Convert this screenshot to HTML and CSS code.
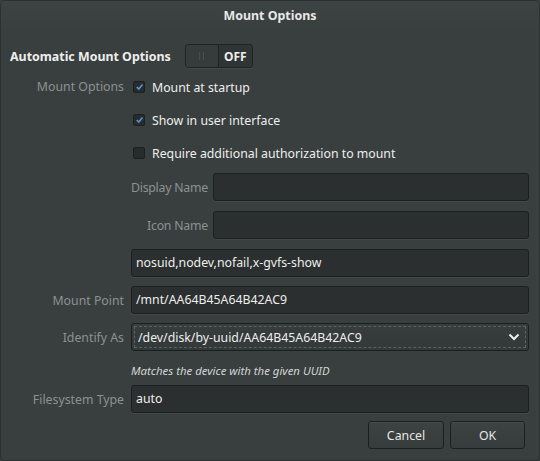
FILE: index.html
```html
<!DOCTYPE html>
<html>
<head>
<meta charset="utf-8">
<link rel="stylesheet" href="styles.css">
</head>
<body>
<div class="window">
  <div class="titlebar">Mount Options</div>
  <div class="content">
    <div class="auto-row">
      <span class="auto-label">Automatic Mount Options</span>
      <div class="switch">
        <div class="knob"><span class="grip"></span></div>
        <span class="switch-text">OFF</span>
      </div>
    </div>
    <div class="form">
      <div class="label label-top">Mount Options</div>
      <div class="opts">
        <div class="check-row"><span class="check checked"><svg viewBox="0 0 12 12" width="12" height="12"><path d="M2.3 6 L5 8.7 L10 2.6" fill="none" stroke="#5594dc" stroke-width="2.2"/></svg></span>Mount at startup</div>
        <div class="check-row"><span class="check checked"><svg viewBox="0 0 12 12" width="12" height="12"><path d="M2.3 6 L5 8.7 L10 2.6" fill="none" stroke="#5594dc" stroke-width="2.2"/></svg></span>Show in user interface</div>
        <div class="check-row"><span class="check"></span>Require additional authorization to mount</div>
        <div class="subform">
          <div class="label sublabel">Display Name</div>
          <div class="entry"></div>
          <div class="label sublabel">Icon Name</div>
          <div class="entry"></div>
        </div>
        <div class="entry">nosuid,nodev,nofail,x-gvfs-show</div>
      </div>
      <div class="label">Mount Point</div>
      <div class="entry">/mnt/AA64B45A64B42AC9</div>
      <div class="label">Identify As</div>
      <div class="combo">
        <div class="combo-inner">
          <span>/dev/disk/by-uuid/AA64B45A64B42AC9</span>
          <svg class="chev" viewBox="0 0 12 8" width="12" height="8"><path d="M1.5 1.5 L6 6 L10.5 1.5" fill="none" stroke="#eeeeec" stroke-width="2"/></svg>
        </div>
      </div>
      <div></div>
      <div class="caption">Matches the device with the given UUID</div>
      <div class="label">Filesystem Type</div>
      <div class="entry">auto</div>
    </div>
    <div class="buttons">
      <button class="btn btn-cancel">Cancel</button>
      <button class="btn btn-ok">OK</button>
    </div>
  </div>
</div>
</body>
</html>
```
FILE: styles.css
```css
* { box-sizing: border-box; }
html, body { margin: 0; padding: 0; background: #393f3f; }
body {
  font-family: "Noto Sans", "DejaVu Sans", sans-serif;
  font-size: 12.3px;
  color: #eeeeec;
}
.window {
  width: 540px;
  height: 461px;
  background: #393f3f;
  border: 1px solid #2b3030;
  border-radius: 5px 5px 4px 4px;
  overflow: hidden;
}
.titlebar {
  height: 30px;
  line-height: 29px;
  text-align: center;
  font-weight: bold;
  font-size: 12.4px;
  color: #e8e8e6;
  background: linear-gradient(#3d4343, #393f3f);
}
.content {
  padding: 13px 10px 0 9px;
}
.auto-row {
  display: flex;
  align-items: center;
  gap: 14px;
  height: 24px;
}
.auto-label {
  font-weight: bold;
  font-size: 12.4px;
}
.switch {
  width: 68px;
  height: 24px;
  background: #2f3434;
  border: 1px solid #1f2323;
  border-radius: 3px;
  display: flex;
  align-items: center;
  box-shadow: 0 1px 0 rgba(255,255,255,0.06);
}
.knob {
  width: 33px;
  height: 22px;
  background: #363b3b;
  border-right: 1px solid #1f2323;
  border-radius: 2px 0 0 2px;
  display: flex;
  align-items: center;
  justify-content: center;
}
.grip {
  width: 5px;
  height: 8px;
  border-left: 1px solid #4a5050;
  border-right: 1px solid #4a5050;
}
.switch-text {
  flex: 1;
  text-align: center;
  font-weight: bold;
  font-size: 12px;
}
.form {
  margin-top: 9px;
  display: grid;
  grid-template-columns: 114px 1fr;
  column-gap: 7px;
  row-gap: 9px;
  align-items: center;
}
.label {
  text-align: right;
  color: #8c9191;
  white-space: nowrap;
}
.label-top {
  align-self: start;
  line-height: 20px;
}
.opts {
  display: flex;
  flex-direction: column;
}
.check-row {
  display: flex;
  align-items: center;
  height: 20px;
  margin-bottom: 13px;
  gap: 7px;
  padding-left: 2px;
}
.check {
  width: 12px;
  height: 12px;
  background: #262b2b;
  border: 1px solid #1c2020;
  border-radius: 2px;
  display: flex;
  align-items: center;
  justify-content: center;
}
.check svg { display: block; margin: -1px 0 0 1px; }
.subform {
  display: grid;
  grid-template-columns: auto 1fr;
  column-gap: 5px;
  row-gap: 10px;
  align-items: center;
  margin-bottom: 10px;
  margin-top: -3px;
}
.sublabel { letter-spacing: -0.25px; }
.entry {
  height: 28px;
  background: #2b2f2f;
  border: 1px solid #1c1f1f;
  border-radius: 3px;
  padding: 0 5px 0 4px;
  line-height: 26px;
  color: #eeeeec;
  box-shadow: 0 1px 0 rgba(255,255,255,0.05);
}
.combo {
  height: 28px;
  background: linear-gradient(#373c3c, #333838);
  border: 1px solid #1c1f1f;
  border-radius: 3px;
  padding: 2px;
}
.combo-inner {
  height: 100%;
  border: 1px dashed #5c6262;
  display: flex;
  align-items: center;
  justify-content: space-between;
  padding: 0 4px 0 3px;
}
.chev { display: block; margin-right: 1px; }
.caption {
  font-style: italic;
  font-size: 11.4px;
  line-height: 15px;
  color: #d2d4d4;
  margin-top: 3px;
  margin-bottom: -2px;
}
.buttons {
  display: flex;
  justify-content: flex-end;
  gap: 6px;
  margin-top: 8px;
  padding-right: 4px;
}
.btn {
  font-family: inherit;
  font-size: 12.3px;
  color: #e6e6e4;
  height: 28px;
  background: linear-gradient(#3d4343, #363b3b);
  border: 1px solid #1c1f1f;
  border-radius: 3px;
  box-shadow: inset 0 1px 0 rgba(255,255,255,0.05);
}
.btn-cancel { width: 76px; }
.btn-ok { width: 75px; }
```
